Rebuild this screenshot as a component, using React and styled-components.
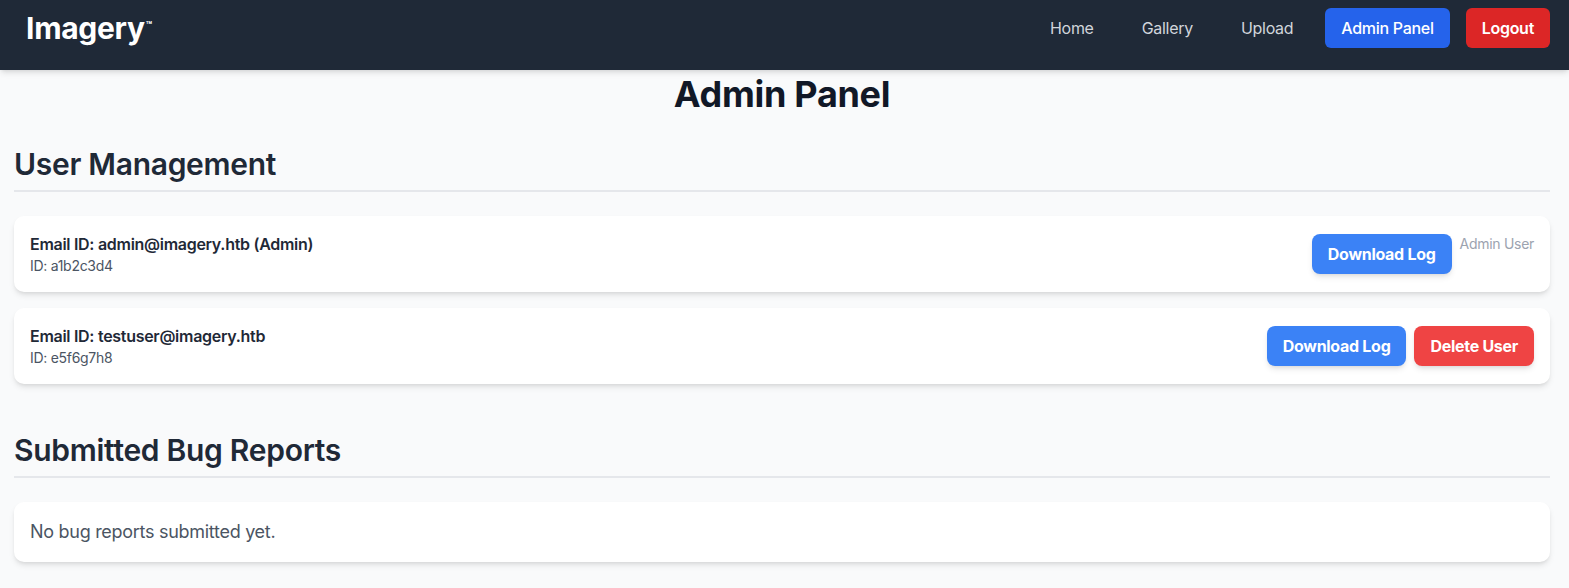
import React from "react";
import styled, { createGlobalStyle } from "styled-components";

const Global = createGlobalStyle`
  * { box-sizing: border-box; }
  html, body { margin: 0; padding: 0; }
  body {
    background: #f9fafb;
    font-family: Inter, "Noto Sans", "Liberation Sans", sans-serif;
    letter-spacing: -0.018em;
    color: #1f2937;
  }
`;

const Header = styled.header`
  height: 70px;
  background: #1f2937;
  box-shadow: 0 4px 6px -1px rgba(0,0,0,0.1), 0 2px 4px -2px rgba(0,0,0,0.1);
  padding: 8px 19px 0 26px;
  position: relative;
  z-index: 1;
`;

const HeaderRow = styled.div`
  height: 40px;
  display: flex;
  align-items: center;
  justify-content: space-between;
`;

const Logo = styled.div`
  color: #fff;
  font-size: 30px;
  line-height: 36px;
  font-weight: 700;
  display: flex;
  align-items: flex-start;
`;

const Tm = styled.span`
  font-size: 10px;
  line-height: 10px;
  font-weight: 700;
  margin-top: 10px;
  margin-left: 1px;
`;

const Nav = styled.nav`
  display: flex;
  align-items: center;
  gap: 16px;
`;

const NavLink = styled.a`
  color: #d1d5db;
  font-size: 16px;
  line-height: 24px;
  padding: 8px 16px;
  text-decoration: none;
`;

const NavButton = styled.a`
  color: #fff;
  background: ${(p) => (p.$variant === "red" ? "#dc2626" : "#2563eb")};
  font-size: 16px;
  line-height: 24px;
  font-weight: ${(p) => (p.$variant === "red" ? 600 : 500)};
  padding: 8px 16px;
  border-radius: 6px;
  text-decoration: none;
`;

const Main = styled.main`
  width: 1536px;
  margin-left: 14px;
  padding-top: 4px;
  padding-bottom: 40px;
`;

const Title = styled.h1`
  margin: 0 0 32px;
  text-align: center;
  font-size: 36px;
  line-height: 40px;
  font-weight: 700;
  color: #111827;
`;

const Section = styled.section`
  margin-bottom: 48px;
`;

const SectionTitle = styled.h2`
  margin: 0 0 24px;
  font-size: 30px;
  line-height: 36px;
  font-weight: 600;
  color: #1f2937;
  padding-bottom: 8px;
  border-bottom: 2px solid #e5e7eb;
`;

const List = styled.div`
  display: flex;
  flex-direction: column;
  gap: 16px;
`;

const Card = styled.div`
  background: #fff;
  border-radius: 10px;
  box-shadow: 0 4px 6px -1px rgba(0,0,0,0.1), 0 2px 4px -2px rgba(0,0,0,0.1);
  padding: 16px;
  display: flex;
  align-items: center;
  justify-content: space-between;
`;

const Email = styled.div`
  font-size: 16px;
  line-height: 24px;
  font-weight: 600;
  color: #1f2937;
`;

const UserId = styled.div`
  font-size: 14px;
  line-height: 20px;
  color: #4b5563;
`;

const Actions = styled.div`
  display: flex;
  gap: 8px;
`;

const Button = styled.button`
  border: none;
  cursor: pointer;
  font-family: inherit;
  letter-spacing: inherit;
  font-size: 16px;
  line-height: 24px;
  font-weight: 700;
  color: #fff;
  background: ${(p) => (p.$danger ? "#ef4444" : "#3b82f6")};
  padding: 8px 16px;
  border-radius: 8px;
  box-shadow: 0 4px 6px -1px rgba(0,0,0,0.1), 0 2px 4px -2px rgba(0,0,0,0.1);
`;

const Note = styled.span`
  font-size: 14px;
  line-height: 20px;
  color: #9ca3af;
`;

const Empty = styled.p`
  margin: 0;
  font-size: 18px;
  line-height: 28px;
  color: #4b5563;
`;

const users = [
  { email: "admin@imagery.htb", admin: true, id: "a1b2c3d4" },
  { email: "testuser@imagery.htb", admin: false, id: "e5f6g7h8" },
];

export default function App() {
  return (
    <>
      <Global />
      <Header>
        <HeaderRow>
          <Logo>
            Imagery<Tm>™</Tm>
          </Logo>
          <Nav>
            <NavLink href="#">Home</NavLink>
            <NavLink href="#">Gallery</NavLink>
            <NavLink href="#">Upload</NavLink>
            <NavButton href="#">Admin Panel</NavButton>
            <NavButton href="#" $variant="red">Logout</NavButton>
          </Nav>
        </HeaderRow>
      </Header>
      <Main>
        <Title>Admin Panel</Title>
        <Section>
          <SectionTitle>User Management</SectionTitle>
          <List>
            {users.map((u) => (
              <Card key={u.id}>
                <div>
                  <Email>
                    Email ID: {u.email}
                    {u.admin ? " (Admin)" : ""}
                  </Email>
                  <UserId>ID: {u.id}</UserId>
                </div>
                <Actions>
                  <Button>Download Log</Button>
                  {u.admin ? <Note>Admin User</Note> : <Button $danger>Delete User</Button>}
                </Actions>
              </Card>
            ))}
          </List>
        </Section>
        <Section>
          <SectionTitle>Submitted Bug Reports</SectionTitle>
          <Card>
            <Empty>No bug reports submitted yet.</Empty>
          </Card>
        </Section>
      </Main>
    </>
  );
}
